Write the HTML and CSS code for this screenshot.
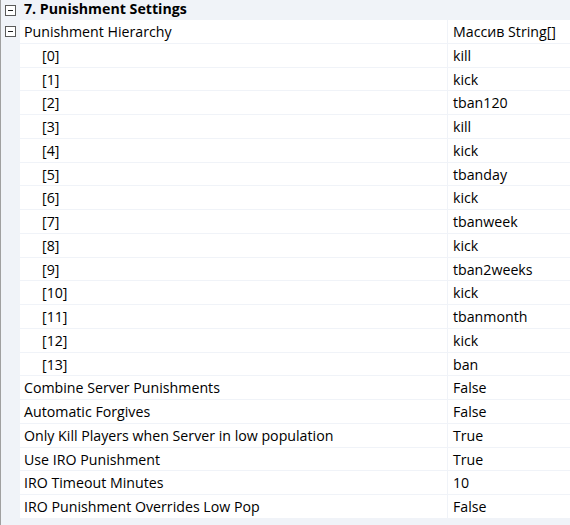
FILE: index.html
```html
<!DOCTYPE html>
<html>
<head>
<meta charset="utf-8">
<link rel="stylesheet" href="styles.css">
</head>
<body>
<div class="grid">
  <div class="cat">
    <div class="margin"><span class="box"></span></div>
    <div class="cat-label">7. Punishment Settings</div>
  </div>
  <div class="row">
    <div class="margin"><span class="box"></span></div>
    <div class="name">Punishment Hierarchy</div>
    <div class="value">Массив String[]</div>
  </div>
  <div class="row"><div class="margin"></div><div class="name sub">[0]</div><div class="value">kill</div></div>
  <div class="row"><div class="margin"></div><div class="name sub">[1]</div><div class="value">kick</div></div>
  <div class="row"><div class="margin"></div><div class="name sub">[2]</div><div class="value">tban120</div></div>
  <div class="row"><div class="margin"></div><div class="name sub">[3]</div><div class="value">kill</div></div>
  <div class="row"><div class="margin"></div><div class="name sub">[4]</div><div class="value">kick</div></div>
  <div class="row"><div class="margin"></div><div class="name sub">[5]</div><div class="value">tbanday</div></div>
  <div class="row"><div class="margin"></div><div class="name sub">[6]</div><div class="value">kick</div></div>
  <div class="row"><div class="margin"></div><div class="name sub">[7]</div><div class="value">tbanweek</div></div>
  <div class="row"><div class="margin"></div><div class="name sub">[8]</div><div class="value">kick</div></div>
  <div class="row"><div class="margin"></div><div class="name sub">[9]</div><div class="value">tban2weeks</div></div>
  <div class="row"><div class="margin"></div><div class="name sub">[10]</div><div class="value">kick</div></div>
  <div class="row"><div class="margin"></div><div class="name sub">[11]</div><div class="value">tbanmonth</div></div>
  <div class="row"><div class="margin"></div><div class="name sub">[12]</div><div class="value">kick</div></div>
  <div class="row"><div class="margin"></div><div class="name sub">[13]</div><div class="value">ban</div></div>
  <div class="row"><div class="margin"></div><div class="name">Combine Server Punishments</div><div class="value">False</div></div>
  <div class="row"><div class="margin"></div><div class="name">Automatic Forgives</div><div class="value">False</div></div>
  <div class="row"><div class="margin"></div><div class="name">Only Kill Players when Server in low population</div><div class="value">True</div></div>
  <div class="row"><div class="margin"></div><div class="name">Use IRO Punishment</div><div class="value">True</div></div>
  <div class="row"><div class="margin"></div><div class="name">IRO Timeout Minutes</div><div class="value">10</div></div>
  <div class="row"><div class="margin"></div><div class="name">IRO Punishment Overrides Low Pop</div><div class="value">False</div></div>
  <div class="cat next">
    <div class="margin"><span class="box"></span></div>
    <div class="cat-label"></div>
  </div>
</div>
</body>
</html>
```
FILE: styles.css
```css
html, body {
  margin: 0;
  padding: 0;
  background: #ffffff;
}
.grid {
  width: 570px;
  height: 525px;
  overflow: hidden;
  border-left: 1px solid #a0a0a0;
  box-sizing: border-box;
  font-family: "Open Sans", "Noto Sans", sans-serif;
  font-size: 14.2px;
  color: #000;
  background: #fff;
}
.cat {
  display: flex;
  height: 20px;
  background: #f0f3f8;
  align-items: center;
}
.cat.next {
  height: 24px;
  align-items: flex-start;
  padding-top: 4px;
  box-sizing: border-box;
}
.cat-label {
  font-weight: bold;
  padding-left: 4px;
  line-height: 18px;
  margin-top: -2px;
}
.margin {
  width: 19px;
  flex: none;
  align-self: stretch;
  display: flex;
  align-items: center;
  justify-content: center;
  background: #f0f3f8;
}
.box {
  width: 9px;
  height: 9px;
  border: 1px solid #5a5a5a;
  background: #fff;
  position: relative;
  margin-left: -1px;
}
.box::after {
  content: "";
  position: absolute;
  left: 2px;
  right: 2px;
  top: 4px;
  height: 1px;
  background: #202020;
}
.row {
  display: flex;
  height: 23.75px;
  box-sizing: border-box;
}
.name {
  width: 427px;
  flex: none;
  box-sizing: border-box;
  padding-left: 4px;
  padding-top: 1px;
  border-bottom: 1px solid #f0f3f8;
  line-height: 22px;
  white-space: nowrap;
  overflow: hidden;
}
.name.sub {
  padding-left: 22px;
}
.value {
  flex: 1;
  box-sizing: border-box;
  border-left: 1px solid #f0f3f8;
  border-bottom: 1px solid #f0f3f8;
  padding-left: 5px;
  padding-top: 1px;
  line-height: 22px;
  white-space: nowrap;
  overflow: hidden;
}
```
